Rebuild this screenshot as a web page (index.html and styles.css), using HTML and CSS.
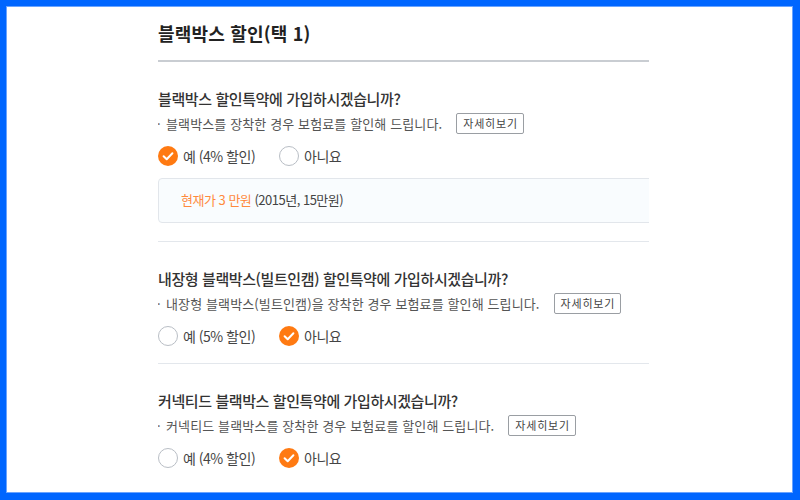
FILE: index.html
```html
<!DOCTYPE html>
<html lang="ko">
<head>
<meta charset="utf-8">
<link rel="stylesheet" href="styles.css">
</head>
<body>
<div class="frame">
  <div class="column">
    <h2 class="head">블랙박스 할인(택 1)</h2>
    <div class="divider"></div>

    <section class="sect">
      <div class="q">블랙박스 할인특약에 가입하시겠습니까?</div>
      <div class="desc"><span class="dot">·</span><span>블랙박스를 장착한 경우 보험료를 할인해 드립니다.</span><button class="more">자세히보기</button></div>
      <div class="opts">
        <label class="opt"><span class="radio on"><svg viewBox="0 0 20 20" width="20" height="20"><path d="M5.6 10.2 L8.7 13.2 L14.4 7.3" fill="none" stroke="#fff" stroke-width="2" stroke-linecap="round" stroke-linejoin="round"/></svg></span>예 (4% 할인)</label>
        <label class="opt"><span class="radio"></span>아니요</label>
      </div>
      <div class="info"><span class="hl">현재가 3 만원</span> (2015년, 15만원)</div>
    </section>

    <section class="sect">
      <div class="q">내장형 블랙박스(빌트인캠) 할인특약에 가입하시겠습니까?</div>
      <div class="desc"><span class="dot">·</span><span>내장형 블랙박스(빌트인캠)을 장착한 경우 보험료를 할인해 드립니다.</span><button class="more">자세히보기</button></div>
      <div class="opts">
        <label class="opt"><span class="radio"></span>예 (5% 할인)</label>
        <label class="opt"><span class="radio on"><svg viewBox="0 0 20 20" width="20" height="20"><path d="M5.6 10.2 L8.7 13.2 L14.4 7.3" fill="none" stroke="#fff" stroke-width="2" stroke-linecap="round" stroke-linejoin="round"/></svg></span>아니요</label>
      </div>
    </section>

    <section class="sect last">
      <div class="q">커넥티드 블랙박스 할인특약에 가입하시겠습니까?</div>
      <div class="desc"><span class="dot">·</span><span>커넥티드 블랙박스를 장착한 경우 보험료를 할인해 드립니다.</span><button class="more">자세히보기</button></div>
      <div class="opts">
        <label class="opt"><span class="radio"></span>예 (4% 할인)</label>
        <label class="opt"><span class="radio on"><svg viewBox="0 0 20 20" width="20" height="20"><path d="M5.6 10.2 L8.7 13.2 L14.4 7.3" fill="none" stroke="#fff" stroke-width="2" stroke-linecap="round" stroke-linejoin="round"/></svg></span>아니요</label>
      </div>
    </section>
  </div>
</div>
</body>
</html>
```

FILE: styles.css
```css
html, body {
  margin: 0;
  padding: 0;
  background: #0066ff;
}
.frame {
  box-sizing: border-box;
  width: 800px;
  height: 500px;
  border-style: solid;
  border-color: #0066ff;
  border-width: 6px 7px 7px 6px;
  background: #fff;
  box-shadow: inset 1px 1px 0 #6aa4ff, inset -1px -1px 0 #6aa4ff;
  padding-left: 152px;
  overflow: hidden;
  font-family: "Noto Sans CJK KR", "Noto Sans", sans-serif;
  color: #333;
}
.column {
  width: 491px;
  overflow: hidden;
}
.head {
  margin: 0;
  padding-top: 14px;
  font-size: 18px;
  line-height: 26px;
  font-weight: 700;
  color: #222;
  letter-spacing: 0.2px;
}
.divider {
  margin-top: 14px;
  height: 2px;
  background: #c9cdd2;
}
.sect {
  padding: 26px 0 17px;
  border-bottom: 1px solid #e3e7ec;
}
.sect.last {
  border-bottom: none;
}
.q {
  font-size: 15px;
  line-height: 22px;
  font-weight: 500;
  color: #333;
  letter-spacing: -0.4px;
}
.desc {
  margin-top: 2px;
  height: 22px;
  display: flex;
  align-items: center;
  font-size: 13px;
  color: #555;
  letter-spacing: 0.12px;
}
.dot {
  width: 9px;
  margin-left: -1px;
}
.more {
  margin-left: 14px;
  height: 21px;
  padding: 0 5px 0 6px;
  border: 1px solid #9a9ea3;
  border-radius: 2px;
  background: #fff;
  font-family: inherit;
  font-size: 11px;
  color: #444;
  letter-spacing: 0.8px;
  line-height: 19px;
}
.opts {
  margin-top: 12px;
  display: flex;
  gap: 24px;
}
.opt {
  display: flex;
  align-items: center;
  gap: 5px;
  font-size: 14px;
  line-height: 20px;
  color: #444;
  letter-spacing: -0.5px;
}
.radio {
  box-sizing: border-box;
  width: 20px;
  height: 20px;
  border-radius: 50%;
  border: 1.5px solid #b9bec5;
  background: #fff;
  display: block;
}
.radio.on {
  border: none;
  background: #ff7a12;
}
.radio svg {
  display: block;
}
.info {
  box-sizing: border-box;
  margin-top: 12px;
  width: 520px;
  height: 45px;
  display: flex;
  align-items: center;
  padding-left: 22px;
  padding-bottom: 2px;
  border: 1px solid #e2e6eb;
  border-radius: 4px;
  background: #f9fcfe;
  font-size: 13px;
  color: #444;
  letter-spacing: -0.5px;
  white-space: pre;
}
.hl {
  color: #ff8a3d;
}
.sect:first-of-type {
  padding-bottom: 18px;
}
```
